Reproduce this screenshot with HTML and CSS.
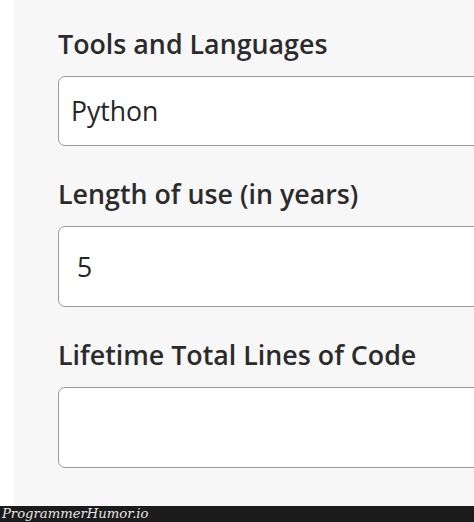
FILE: index.html
```html
<!DOCTYPE html>
<html>
<head>
<meta charset="utf-8">
<link rel="stylesheet" href="styles.css">
</head>
<body>
<div class="page">
  <div class="panel">
    <label class="label">Tools and Languages</label>
    <div class="field field-short"><span class="value">Python</span></div>
    <label class="label">Length of use (in years)</label>
    <div class="field field-tall"><span class="value value-num">5</span></div>
    <label class="label">Lifetime Total Lines of Code</label>
    <div class="field field-tall"></div>
  </div>
  <div class="footer">ProgrammerHumor.io</div>
</div>
</body>
</html>
```
FILE: styles.css
```css
html, body {
  margin: 0;
  padding: 0;
  background: #ffffff;
  overflow: hidden;
}
.page {
  width: 474px;
  height: 522px;
  display: flex;
  flex-direction: column;
  overflow: hidden;
}
.panel {
  flex: 1;
  margin-left: 14px;
  background: #f7f7f7;
  padding: 25px 0 0 44px;
  display: flex;
  flex-direction: column;
  overflow: hidden;
}
.label {
  font-family: "Open Sans", sans-serif;
  font-weight: 600;
  font-size: 26.8px;
  line-height: 38px;
  color: #2b2b2b;
  margin-bottom: 13px;
  white-space: nowrap;
}
.field {
  width: 460px;
  flex-shrink: 0;
  box-sizing: border-box;
  background: #ffffff;
  border: 1.5px solid #9a9a9a;
  border-radius: 7px;
  margin-bottom: 29px;
  display: flex;
  align-items: center;
  padding-left: 12px;
}
.field-short { height: 70px; }
.field-tall { height: 81px; }
.value {
  font-family: "Open Sans", sans-serif;
  font-size: 26.6px;
  color: #262626;
}
.value-num {
  padding-left: 6px;
}
.footer {
  height: 16px;
  background: #1b1b1b;
  color: #e6e6e6;
  font-family: "DejaVu Serif", serif;
  font-style: italic;
  font-size: 13.2px;
  line-height: 16px;
  padding-left: 2px;
  white-space: nowrap;
}
```
